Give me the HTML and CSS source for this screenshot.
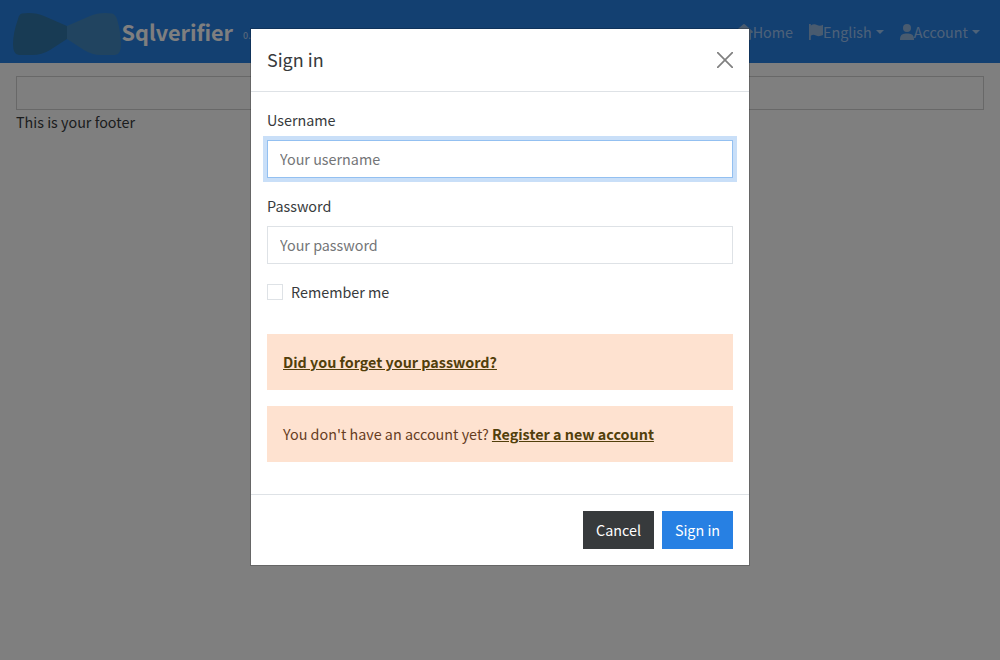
FILE: index.html
```html
<!DOCTYPE html>
<html lang="en">
<head>
<meta charset="utf-8">
<title>Sqlverifier</title>
<link rel="stylesheet" href="styles.css">
</head>
<body>
<nav class="navbar">
  <a class="brand">
    <svg class="logo" viewBox="0 0 108 42" width="108" height="42">
      <path class="logo-left" d="M9 .5Q22-1 31 3L54 13V26L37 37Q29 42 19 42H6Q0 42 0 31Q0 20 5 6Q6 1 9 .5Z"/>
      <path class="logo-right" d="M54 13L77 3Q86-1 99 .5Q102 1 104 6Q108 20 108 31Q108 42 102 42H88Q79 42 71 37L54 26Z"/>
    </svg>
    <span class="brand-name">Sqlverifier</span>
    <span class="version">0.0.1</span>
  </a>
  <ul class="menu">
    <li class="item item-home">
      <svg class="icon" viewBox="0 0 18 16" width="18" height="16"><path d="M8.3.3Q9 -.2 9.7.3L17.7 7.3Q18.3 8.9 17 9H16V15Q16 16 15 16H11V11H7V16H3Q2 16 2 15V9H1Q-.3 8.9.3 7.3Z"/></svg>
      <span class="home-text">Home</span>
    </li>
    <li class="item item-lang">
      <svg class="icon" viewBox="0 0 14 16" width="14" height="16"><path d="M0 0H1.8V1.5Q5-.5 8 1T14 .7V11Q10 13 7 11.5T1.8 11.7V16H0Z"/></svg>
      <span class="lang-text">English</span><i class="caret"></i>
    </li>
    <li class="item item-account">
      <svg class="icon" viewBox="0 0 14 16" width="14" height="16"><circle cx="7" cy="4" r="4"/><path d="M5.6 9.5H8.4Q14 9.7 14 15V16H0V15Q0 9.7 5.6 9.5Z"/></svg>
      <span class="account-text">Account</span><i class="caret"></i>
    </li>
  </ul>
</nav>
<main class="page">
  <div class="card"></div>
  <footer class="footer"><span class="footer-text">This is your footer</span></footer>
</main>
<div class="backdrop">
  <section class="modal" role="dialog">
    <header class="modal-header">
      <h4 class="title">Sign in</h4>
      <svg class="close" viewBox="0 0 16 16" width="16" height="16"><path d="M.7.7L15.3 15.3M15.3.7L.7 15.3"/></svg>
    </header>
    <form class="modal-body">
      <label class="label label-user" for="username">Username</label>
      <input class="input input-focus" id="username" type="text" placeholder="Your username">
      <label class="label label-pass" for="password">Password</label>
      <input class="input" id="password" type="password" placeholder="Your password">
      <label class="check"><span class="box"></span><span class="check-text">Remember me</span></label>
      <div class="alert"><a class="alert-link forgot">Did you forget your password?</a></div>
      <div class="alert"><span class="question">You don't have an account yet?</span> <a class="alert-link register">Register a new account</a></div>
    </form>
    <footer class="modal-footer">
      <button class="btn btn-cancel" type="button">Cancel</button>
      <button class="btn btn-submit" type="button">Sign in</button>
    </footer>
  </section>
</div>
</body>
</html>
```
FILE: styles.css
```css
* { box-sizing: border-box; }
body {
  margin: 0;
  font: 400 14.35px/24px "Source Sans Pro", "Noto Sans CJK SC", sans-serif;
  color: #373a3c;
  background: #fff;
  height: 660px;
  overflow: hidden;
}
.navbar {
  height: 63px;
  padding: 0 20px 0 13px;
  display: flex;
  align-items: center;
  justify-content: space-between;
  background: #2780e3;
  color: #fff;
}
.brand { display: flex; align-items: center; }
.logo { display: block; margin-top: 5px; }
.logo-left { fill: #3076a8; }
.logo-right { fill: #4289c0; }
.brand-name { font-size: 21.6px; font-weight: 700; margin-left: .5px; }
.version { font-size: 9px; font-weight: 500; margin: 8px 0 0 10px; color: rgba(255, 255, 255, .6); }
.menu { display: flex; gap: 16px; margin: 0; padding: 0; list-style: none; color: rgba(255, 255, 255, .55); }
.item { display: flex; align-items: center; }
.icon { display: block; fill: #93b6df; }
.caret { border: 4px solid transparent; border-top-color: currentColor; border-bottom: 0; margin-left: 4px; }
.page { padding: 13px 16px; }
.card { height: 34px; border: 1px solid #d0d0d0; }
.backdrop {
  position: fixed;
  inset: 0;
  padding-top: 28px;
  background: rgba(0, 0, 0, .5);
}
.modal {
  width: 500px;
  margin: 0 auto;
  background: #fff;
  background-clip: padding-box;
  border: 1px solid rgba(0, 0, 0, .2);
}
.modal-header {
  display: flex;
  justify-content: space-between;
  align-items: center;
  padding: 16px;
  border-bottom: 1px solid #dee2e6;
}
.title { margin: 0; padding-bottom: 2px; font-size: 17.94px; line-height: 28px; font-weight: 400; }
.close { fill: none; stroke: #808080; stroke-width: 1.7; stroke-linecap: round; }
.modal-body { padding: 16px; }
.label { display: block; margin-bottom: 8px; }
.input {
  display: block;
  width: 100%;
  height: 38px;
  margin-bottom: 16px;
  padding: 5px 12px 7px;
  border: 1px solid #dee2e6;
  border-radius: 0;
  outline: 0;
  background: #fff;
  font: inherit;
}
.input::placeholder { color: #737577; opacity: 1; }
.input-focus { border-color: #93c0f1; box-shadow: 0 0 0 4px #c9dff8; }
.check { display: flex; align-items: center; gap: 8px; margin-bottom: 30px; }
.box { width: 16px; height: 16px; border: 1px solid #dee2e6; }
.alert { height: 56px; padding: 16px; margin-bottom: 16px; background: #fee2d0; color: #663d1f; white-space: nowrap; }
.alert-link { font-weight: 700; text-decoration: underline; color: #523f0b; }
.modal-footer { display: flex; justify-content: flex-end; gap: 8px; padding: 16px; border-top: 1px solid #dee2e6; }
.btn { width: 71px; height: 38px; padding: 0; border: 0; color: #fff; font: inherit; }
.btn-cancel { background: #373a3c; }
.btn-submit { background: #2780e3; }
```
